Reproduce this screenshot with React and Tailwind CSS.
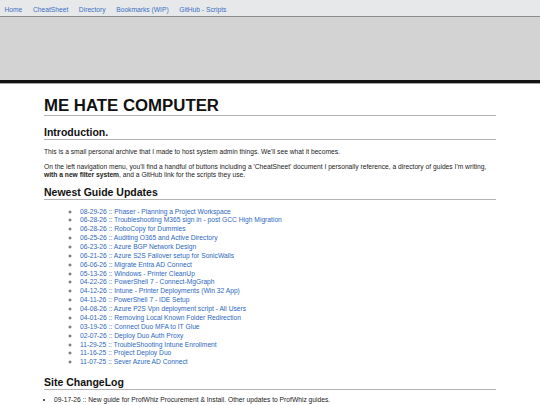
import React from "react";

const guides = [
  "08-29-26 :: Phaser - Planning a Project Workspace",
  "06-28-26 :: Troubleshooting M365 sign in - post GCC High Migration",
  "06-28-26 :: RoboCopy for Dummies",
  "06-25-26 :: Auditing O365 and Active Directory",
  "06-23-26 :: Azure BGP Network Design",
  "06-21-26 :: Azure S2S Failover setup for SonicWalls",
  "06-06-26 :: Migrate Entra AD Connect",
  "05-13-26 :: Windows - Printer CleanUp",
  "04-22-26 :: PowerShell 7 - Connect-MgGraph",
  "04-12-26 :: Intune - Printer Deployments (Win 32 App)",
  "04-11-26 :: PowerShell 7 - IDE Setup",
  "04-08-26 :: Azure P2S Vpn deployment script - All Users",
  "04-01-26 :: Removing Local Known Folder Redirection",
  "03-19-26 :: Connect Duo MFA to IT Glue",
  "02-07-26 :: Deploy Duo Auth Proxy",
  "11-29-25 :: TroubleShooting Intune Enrollment",
  "11-16-25 :: Project Deploy Duo",
  "11-07-25 :: Sever Azure AD Connect",
];

const nav = ["Home", "CheatSheet", "Directory", "Bookmarks (WIP)", "GitHub - Scripts"];

function H2({ children, className = "" }) {
  return (
    <h2
      className={
        "text-[10.5px] leading-[11px] font-bold text-[#111] pb-[1px] border-b border-[#b4b4b4] " +
        className
      }
    >
      {children}
    </h2>
  );
}

export default function App() {
  return (
    <div
      className="w-[540px] min-h-[405px] bg-white text-[#222] text-[6.7px] leading-[7.7px]"
      style={{ fontFamily: '"Liberation Sans", Arial, sans-serif' }}
    >
      <nav className="h-[17px] bg-[#e7e8ea] border-b border-[#8c8c8c] flex items-start gap-[10.6px] pl-[4.5px] pt-[6.4px]">
        {nav.map((n) => (
          <a key={n} className="text-[#3a70c2] whitespace-nowrap">
            {n}
          </a>
        ))}
      </nav>
      <div className="h-[63px] bg-[#d3d3d3]" />
      <div className="h-[3px] bg-[#111]" />
      <div className="h-[1px] bg-[#a3a3a3]" />

      <main className="px-[44px] pb-[20px]">
        <h1 className="mt-[13px] text-[16.8px] leading-[17px] font-bold text-[#111] pb-[0.5px] border-b border-[#b4b4b4]">
          ME HATE COMPUTER
        </h1>

        <H2 className="mt-[11px]">Introduction.</H2>
        <p className="mt-[8px]">
          This is a small personal archive that I made to host system admin things. We'll see what it becomes.
        </p>
        <p className="mt-[8px]">
          <span className="whitespace-nowrap">
            On the left navigation menu, you'll find a handful of buttons including a 'CheatSheet' document I
            personally reference, a directory of guides I'm writing,
          </span>
          <br />
          <b>with a new filter system</b>, and a GitHub link for the scripts they use.
        </p>

        <H2 className="mt-[8px]">Newest Guide Updates</H2>
        <ul className="mt-[8px] pl-[36px] list-[circle]">
          {guides.map((g, i) => (
            <li key={i} className="leading-[8.86px] text-[#2c68c0] marker:text-[#555]">
              <a>{g}</a>
            </li>
          ))}
        </ul>

        <H2 className="mt-[10px]">Site ChangeLog</H2>
        <ul className="mt-[6px] pl-[10px] list-disc">
          <li>09-17-26 :: New guide for ProfWhiz Procurement &amp; Install. Other updates to ProfWhiz guides.</li>
        </ul>
      </main>
    </div>
  );
}
